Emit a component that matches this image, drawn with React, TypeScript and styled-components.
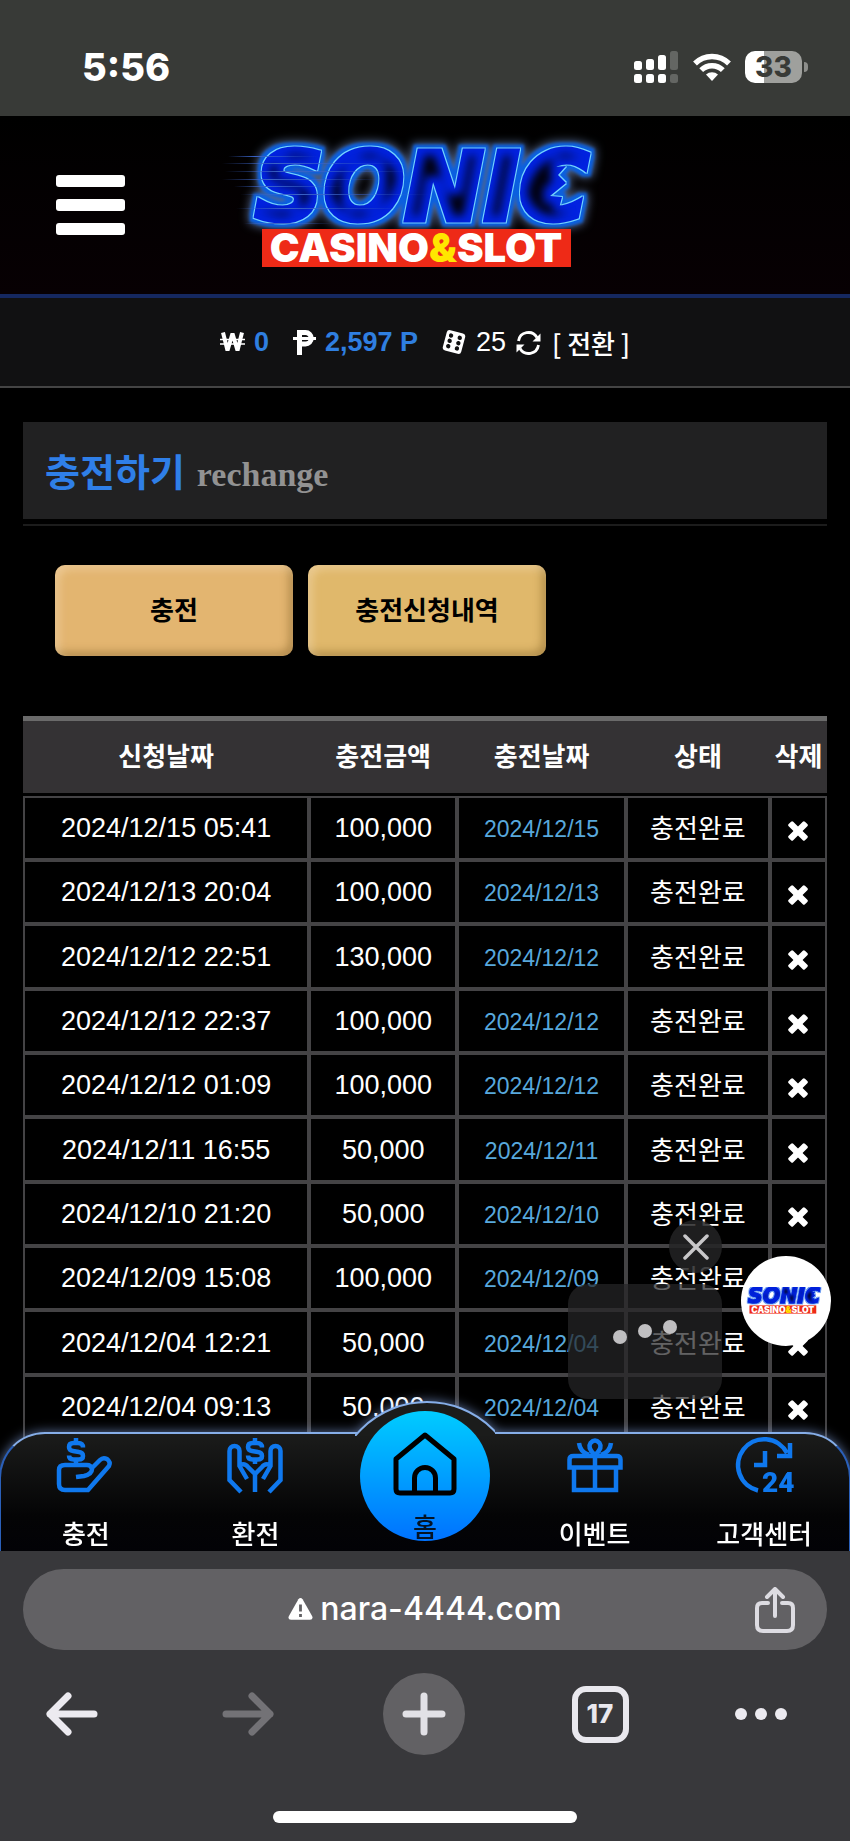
import React from "react";
import styled, { createGlobalStyle } from "styled-components";

const sans = `"Liberation Sans", "Noto Sans CJK KR", sans-serif`;
const korean = `"Noto Sans CJK KR", sans-serif`;
const system = `Inter, "Liberation Sans", sans-serif`;

const GlobalStyle = createGlobalStyle`
  * { box-sizing: border-box; }
  body { margin: 0; background: #000; }
  button { border: 0; padding: 0; background: none; color: inherit; font: inherit; cursor: pointer; }
  a { color: inherit; text-decoration: none; }
  svg { display: block; flex: none; }
`;

const Page = styled.div`
  display: flex;
  flex-direction: column;
  min-height: 100vh;
  background: #000;
  color: #fff;
  font-family: ${sans};
`;

/* ---------- phone status bar ---------- */

const StatusBar = styled.div`
  display: flex;
  align-items: center;
  justify-content: space-between;
  height: 116px;
  padding: 18px 42px 0 82px;
  background: #383a37;
  font-family: ${system};
`;

const Clock = styled.time`
  font-size: 38px;
  line-height: 40px;
  font-weight: 800;
`;

const StatusIcons = styled.div`
  display: flex;
  align-items: center;
  gap: 14px;
`;

const Battery = styled.div`
  display: flex;
  align-items: center;
  gap: 2px;

  &::after {
    content: "";
    width: 4px;
    height: 10px;
    border-radius: 0 4px 4px 0;
    background: #8d8e8b;
  }
`;

const BatteryLevel = styled.span`
  width: 57px;
  border-radius: 10px;
  background: linear-gradient(90deg, #fff 34%, #9fa09d 34%);
  color: #383a37;
  font-size: 28px;
  line-height: 32px;
  font-weight: 800;
  text-align: center;
`;

/* ---------- site ---------- */

const Site = styled.div`
  position: relative;
  flex: 1;
  padding-bottom: 111px;
  overflow: hidden;
`;

const Header = styled.header`
  display: grid;
  grid-template-columns: 1fr auto 1fr;
  align-items: center;
  height: 182px;
  padding: 0 56px;
  border-bottom: 4px solid #152860;
  background: linear-gradient(#000, #070003);
`;

const MenuButton = styled.button`
  display: flex;
  flex-direction: column;
  gap: 12px;
  width: 69px;
`;

const MenuBar = styled.span`
  height: 12px;
  border-radius: 3px;
  background: #fff;
`;

const Balance = styled.div`
  display: flex;
  align-items: center;
  justify-content: center;
  height: 90px;
  border-bottom: 2px solid #444;
  background: #111112;
  font-size: 27px;
  line-height: 32px;
`;

const Amount = styled.b`
  margin: 0 24px 0 9px;
  color: #2f7fe0;
`;

const SpinCount = styled.span`
  margin: 0 10px;
`;

const ConvertButton = styled.button`
  display: flex;
  align-items: center;
  gap: 11px;
  padding-top: 2px;
  font-family: ${korean};
  font-size: 26px;
  line-height: 32px;
  font-weight: 500;
`;

const Content = styled.main`
  padding: 34px 23px 0;
`;

const TitleBox = styled.div`
  display: flex;
  align-items: center;
  height: 97px;
  padding: 2px 22px 0;
  background: #212122;
`;

const Title = styled.h1`
  display: flex;
  align-items: baseline;
  gap: 12px;
  margin: 0;
  color: #2f7fe8;
  font-family: ${korean};
  font-size: 38px;
  line-height: 49px;
  font-weight: 700;
`;

const Subtitle = styled.small`
  color: #929292;
  font-family: "Liberation Serif", serif;
  font-size: 34px;
  font-weight: 700;
`;

const Rule = styled.hr`
  height: 2px;
  margin: 5px 0 39px;
  border: 0;
  background: #1c1c1c;
`;

const TabButtons = styled.div`
  display: flex;
  gap: 15px;
  padding: 0 32px;
`;

const TabButton = styled.button<{ $active?: boolean }>`
  width: 238px;
  height: 91px;
  padding-bottom: 4px;
  border-radius: 10px;
  background: ${(p) => (p.$active ? "#e0b86b" : "#e3b570")};
  box-shadow:
    inset 4px 4px 8px rgba(255, 235, 205, 0.4),
    inset -4px -4px 8px rgba(90, 60, 10, 0.35);
  color: #000;
  font-family: ${korean};
  font-size: 26px;
  font-weight: 700;
`;

const History = styled.table`
  width: 100%;
  margin-top: 60px;
  border-collapse: separate;
  border-spacing: 0;
  table-layout: fixed;
  text-align: center;
  font-size: 27px;
  line-height: 32px;
`;

const HeadCell = styled.th<{ $width: string }>`
  width: ${(p) => p.$width};
  height: 80px;
  padding: 0 0 4px;
  border-top: 5px solid #6a6a6a;
  border-bottom: 3px solid #000;
  background: #343234;
  font-family: ${korean};
  font-size: 26px;
  font-weight: 700;
  white-space: nowrap;
`;

const Row = styled.tr`
  height: 64px;

  &:nth-child(3n) {
    height: 65px;
  }
`;

const Cell = styled.td`
  padding: 0;
  border: 2px solid #444345;
  white-space: nowrap;
`;

const DateCell = styled(Cell)`
  padding-top: 2px;
  color: #58a8dc;
  font-size: 23px;
`;

const StateCell = styled(Cell)`
  padding-bottom: 2px;
  font-family: ${korean};
  font-size: 26px;
`;

const DeleteCell = styled(Cell)`
  padding-top: 6px;
`;

const DeleteButton = styled.button`
  display: block;
  margin: 0 auto;
`;

/* ---------- floating chat ---------- */

const Chat = styled.aside`
  position: absolute;
  right: 19px;
  bottom: 152px;
  display: flex;
  align-items: flex-start;
  gap: 19px;
`;

const ChatPreview = styled.div`
  display: flex;
  flex-direction: column;
  align-items: flex-end;
  gap: 11px;
`;

const ChatClose = styled.button`
  display: grid;
  place-items: center;
  width: 53px;
  height: 53px;
  border-radius: 50%;
  background: rgba(35, 35, 36, 0.85);
`;

const Typing = styled.div`
  display: grid;
  place-items: center;
  width: 154px;
  height: 115px;
  padding-bottom: 20px;
  border-radius: 20px;
  background: rgba(38, 38, 39, 0.72);
`;

const ChatBubble = styled.button`
  display: grid;
  place-items: center;
  width: 90px;
  height: 90px;
  margin-top: 36px;
  border-radius: 50%;
  background: #fff;
`;

/* ---------- bottom navigation ---------- */

const BottomNav = styled.nav`
  position: absolute;
  inset: auto 0 0;
  filter: drop-shadow(0 0 6px rgba(150, 185, 255, 0.6));
`;

const NavList = styled.ul`
  display: grid;
  grid-template-columns: repeat(5, 1fr);
  height: 119px;
  margin: 0 -1px;
  padding: 0;
  border: 2px solid #2a5fb8;
  border-top-color: #86aee8;
  border-bottom: 0;
  border-radius: 46px 46px 0 0;
  background: linear-gradient(#1b1c1b, #040405 70%, #020206);
  list-style: none;
`;

const NavHump = styled.div`
  position: absolute;
  top: -33px;
  left: calc(50% - 70px);
  width: 140px;
  height: 35px;
  overflow: hidden;

  &::before {
    content: "";
    display: block;
    width: 184px;
    height: 184px;
    margin-left: -22px;
    border: 2px solid #86aee8;
    border-radius: 50%;
    background: #1b1c1b;
  }
`;

const NavItem = styled.li`
  position: relative;
  display: flex;
  justify-content: center;
`;

const NavLink = styled.a`
  display: flex;
  flex-direction: column;
  align-items: center;
  gap: 23px;
  padding-top: 4px;
  color: #fff;
  font-family: ${korean};
  font-size: 26px;
  line-height: 32px;
  font-weight: 500;
`;

const HomeLink = styled.a`
  position: absolute;
  top: -23px;
  display: flex;
  flex-direction: column;
  align-items: center;
  gap: 14px;
  width: 130px;
  height: 130px;
  padding-top: 21px;
  border-radius: 50%;
  background: linear-gradient(#00ccff, #0072ff);
  color: #041426;
  font-family: ${korean};
  font-size: 26px;
  line-height: 32px;
  font-weight: 500;
`;

/* ---------- browser chrome ---------- */

const Browser = styled.footer`
  display: flex;
  flex-direction: column;
  height: 290px;
  padding-top: 18px;
  background: #38383b;
  font-family: ${system};
`;

const AddressBar = styled.div`
  display: grid;
  grid-template-columns: 1fr auto 1fr;
  align-items: center;
  height: 81px;
  margin: 0 23px;
  padding: 0 32px;
  border-radius: 41px;
  background: #626164;
`;

const Address = styled.button`
  grid-column: 2;
  display: flex;
  align-items: center;
  gap: 7px;
  padding-bottom: 2px;
  font-size: 32px;
  line-height: 40px;
  font-weight: 500;
`;

const ShareButton = styled.button`
  justify-self: end;
`;

const Toolbar = styled.div`
  display: flex;
  justify-content: space-between;
  margin-top: 23px;
  padding: 0 33px 0 31px;
`;

const ToolButton = styled.button<{ $filled?: boolean; $start?: boolean }>`
  display: flex;
  align-items: center;
  justify-content: ${(p) => (p.$start ? "flex-start" : "center")};
  width: 82px;
  height: 82px;
  border-radius: 50%;
  background: ${(p) => (p.$filled ? "#626164" : "transparent")};
`;

const TabCount = styled.span`
  width: 57px;
  height: 57px;
  border: 6px solid #e9e8ee;
  border-radius: 14px;
  color: #e9e8ee;
  font-size: 26px;
  line-height: 44px;
  font-weight: 800;
  text-align: center;
`;

const HomeIndicator = styled.div`
  width: 304px;
  height: 12px;
  margin: auto auto 18px;
  border-radius: 6px;
  background: #fff;
`;

/* ---------- drawings ---------- */

const speedLines = [
  [8, 26, 90], [2, 33, 180], [5, 41, 190], [2, 49, 160],
  [14, 56, 110], [20, 64, 190], [16, 78, 170], [24, 93, 90],
];

function Logo({ width, light = false }: { width: number; light?: boolean }) {
  const id = light ? "light" : "dark";
  return (
    <svg
      width={width}
      viewBox={light ? "26 14 370 128" : "0 0 410 150"}
      role="img"
      aria-label="SONIC CASINO&SLOT"
    >
      <defs>
        {/* halo, blue rim, bright outline, fill and dark core, built up from one word */}
        <filter id={`${id}-neon`} x="-10%" y="-20%" width="120%" height="140%" colorInterpolationFilters="sRGB">
          <feMorphology in="SourceAlpha" operator="dilate" radius="5" result="wide" />
          <feGaussianBlur in="wide" stdDeviation="5" result="halo" />
          <feFlood floodColor={light ? "#ffffff" : "#54688f"} />
          <feComposite in2="halo" operator="in" result="haloPaint" />
          <feMorphology in="SourceAlpha" operator="dilate" radius="4" result="rim0" />
          <feGaussianBlur in="rim0" stdDeviation="1.5" result="rim" />
          <feFlood floodColor={light ? "#6d9cf0" : "#0a5fe0"} />
          <feComposite in2="rim" operator="in" result="rimPaint" />
          <feMorphology in="SourceAlpha" operator="dilate" radius="1" result="edge" />
          <feFlood floodColor={light ? "#0a3ad0" : "#74d4ff"} />
          <feComposite in2="edge" operator="in" result="edgePaint" />
          <feMorphology in="SourceAlpha" operator="erode" radius="7" result="core0" />
          <feGaussianBlur in="core0" stdDeviation="4" result="core" />
          <feFlood floodColor="#01010f" />
          <feComposite in2="core" operator="in" result="corePaint" />
          <feMerge>
            <feMergeNode in="haloPaint" />
            <feMergeNode in="rimPaint" />
            <feMergeNode in="edgePaint" />
            <feMergeNode in="SourceGraphic" />
            <feMergeNode in="corePaint" />
          </feMerge>
        </filter>
        <linearGradient id={`${id}-line`}>
          <stop offset="0" stopColor="#3a63c8" stopOpacity="0" />
          <stop offset="0.3" stopColor="#3a63c8" />
          <stop offset="1" stopColor="#3a63c8" stopOpacity="0" />
        </linearGradient>
      </defs>
      <g filter={`url(#${id}-neon)`} fill="#0222e0">
        <text
          x="35"
          y="90"
          fontFamily="'DejaVu Sans', sans-serif"
          fontSize="95"
          fontWeight="700"
          fontStyle="italic"
          stroke="#0222e0"
          strokeWidth="5"
        >
          SONIC
        </text>
        {/* quills in the mouth of the last letter */}
        <path d="M322 38L346 36L338 45L346 53L330 66L342 67L338 82L318 76Z" />
      </g>
      {!light &&
        speedLines.map(([x, y, w]) => (
          <rect key={y} x={x} y={y} width={w} height="1" fill={`url(#${id}-line)`} />
        ))}
      <rect x="42" y="99" width="309" height="38" fill="#ee2a17" />
      <text
        x="196"
        y="132"
        textAnchor="middle"
        fontFamily="Inter, sans-serif"
        fontSize="40"
        fontWeight="900"
        fill="#fff"
      >
        CASINO<tspan fill="#ffe600">&amp;</tspan>SLOT
      </text>
    </svg>
  );
}

const SignalIcon = () => (
  <svg width="45" height="32" viewBox="0 0 45 32" fill="#fff" aria-hidden="true">
    <rect x="0" y="10" width="8" height="9" rx="2.5" />
    <rect x="12" y="8" width="8" height="11" rx="2.5" />
    <rect x="24" y="4" width="8" height="15" rx="2.5" />
    <rect x="36" y="0" width="8" height="19" rx="2.5" fill="#646663" />
    <rect x="0" y="23" width="8" height="9" rx="2.5" />
    <rect x="12" y="23" width="8" height="9" rx="2.5" />
    <rect x="24" y="23" width="8" height="9" rx="2.5" />
    <rect x="36" y="23" width="8" height="9" rx="2.5" fill="#646663" />
  </svg>
);

const WifiIcon = () => (
  <svg width="38" height="28" viewBox="0 0 38 28" aria-hidden="true">
    <g fill="none" stroke="#fff" strokeWidth="5.4">
      <path d="M2 10.5a24 24 0 0 1 34 0" />
      <path d="M8.2 17.2a15.3 15.3 0 0 1 21.6 0" />
    </g>
    <path d="M19 28l-6-6.4a8.6 8.6 0 0 1 12 0z" fill="#fff" />
  </svg>
);

const WonIcon = () => (
  <svg width="25" height="20" viewBox="0 0 25 20" fill="none" stroke="#fff" aria-hidden="true">
    <path d="M3 0.5l4.5 18 5-17 5 17 4.5-18" strokeWidth="4" strokeLinejoin="bevel" />
    <path d="M0 7.5h25M0 12h25" strokeWidth="1.6" />
  </svg>
);

const PointIcon = () => (
  <svg width="23" height="25" viewBox="0 0 23 25" fill="none" stroke="#fff" aria-hidden="true">
    <path d="M6.5 25V2.5h6a5.5 5.5 0 0 1 0 11.5h-6" strokeWidth="5" />
    <path d="M0 8.5h23" strokeWidth="3" />
  </svg>
);

const DiceIcon = () => (
  <svg width="24" height="24" viewBox="0 0 24 24" aria-hidden="true">
    <g transform="rotate(15 12 12)">
      <rect x="2.5" y="1.5" width="19" height="21" rx="3" fill="#fff" />
      {[6.5, 12, 17.5].map((y) => (
        <g key={y} fill="#111112">
          <circle cx="7.5" cy={y} r="2.2" />
          <circle cx="16.5" cy={y} r="2.2" />
        </g>
      ))}
    </g>
  </svg>
);

const SyncIcon = () => (
  <svg width="25" height="24" viewBox="0 0 25 24" fill="none" stroke="#fff" strokeWidth="2.8" aria-hidden="true">
    <path d="M2.5 10a10 10 0 0 1 18.5-3.5M22.5 14a10 10 0 0 1-18.5 3.5" />
    <path d="M24.5 2.5v8h-8z M.5 21.5v-8h8z" fill="#fff" stroke="none" />
  </svg>
);

const CrossIcon = () => (
  <svg width="20" height="20" viewBox="0 0 20 20" fill="#fff" aria-hidden="true">
    <rect x="-1.5" y="6.8" width="23" height="6.4" rx="1.5" transform="rotate(45 10 10)" />
    <rect x="-1.5" y="6.8" width="23" height="6.4" rx="1.5" transform="rotate(-45 10 10)" />
  </svg>
);

const navStroke = {
  width: 56,
  height: 56,
  viewBox: "0 0 56 56",
  fill: "none",
  stroke: "#0f78ee",
  strokeWidth: 4.5,
  "aria-hidden": true,
} as const;

const dollar =
  "M26 9.5Q26 5 21 5H16.5Q12 5 12 9Q12 12.5 16 13L22 14Q26 14.5 26 18Q26 21.5 21.5 21.5H16.5Q12 21.5 12 17.5M19 0V5M19 21.5V26";

const DepositIcon = () => (
  <svg {...navStroke} viewBox="1 0 56 56" overflow="visible">
    <path d={dollar} />
    <path d="M19 39L27 38Q35 36 35 31Q34 27 30 27H8Q2 27 2 32V46Q2 52 8 52H31L52 28Q54 24 50 21Q46 19 43 22L34 31" />
  </svg>
);

const WithdrawIcon = () => (
  <svg {...navStroke}>
    <path d={dollar} transform="translate(9 0)" />
    <path d="M14 54L2.5 42V13a5 5 0 0 1 10 0V28L20 41M13 27Q18 25 21 29L28 36V54" />
    <path d="M42 54L53.5 42V13a5 5 0 0 0 -10 0V28L36 41M43 27Q38 25 35 29L28 36" />
  </svg>
);

const GiftIcon = () => (
  <svg {...navStroke}>
    <path d="M2.5 29.5V21.5Q2.5 18 6.5 18H49.5Q53.5 18 53.5 21.5V29.5ZM7 30V52H49V30M28 18V52" />
    <path d="M28 17Q20 10 23.5 5Q28 0 32.5 5Q36 10 28 17M12 5Q13 14 22 17M44 5Q43 14 34 17" />
  </svg>
);

const SupportIcon = () => (
  <svg {...navStroke} viewBox="-1 0 56 56" overflow="visible">
    <path d="M21 52.5A26 26 0 1 1 50 15M53 5V18H40M28 13V27H17" />
    <text x="25" y="54" fontFamily="Roboto, sans-serif" fontSize="28" fontWeight="900" fill="#0f78ee" stroke="none">
      24
    </text>
  </svg>
);

const HomeIcon = () => (
  <svg width="64" height="64" viewBox="0 0 64 64" fill="none" stroke="#000" strokeWidth="5" strokeLinejoin="round" aria-hidden="true">
    <path d="M32 3L61 27V57Q61 61 57 61H7Q3 61 3 57V27Z" />
    <path d="M21.5 61V46a10.5 10.5 0 0 1 21 0V61" />
  </svg>
);

const WarningIcon = () => (
  <svg width="25" height="22" viewBox="0 0 25 22" aria-hidden="true">
    <path d="M10.4 1.2q2.1-2.3 4.2 0l9.6 17q1.2 3.2-2.2 3.6H3q-3.4-.4-2.2-3.6z" fill="#fff" />
    <path d="M12.5 6.5v7M12.5 16v3" stroke="#626164" strokeWidth="2.8" />
  </svg>
);

const ShareIcon = () => (
  <svg width="40" height="46" viewBox="0 0 40 46" fill="none" stroke="#dddce2" strokeWidth="4" strokeLinecap="round" strokeLinejoin="round" aria-hidden="true">
    <path d="M13 16H7q-5 0-5 5v17q0 6 6 6h24q6 0 6-6V21q0-5-5-5h-6" />
    <path d="M20 29V3M12 10l8-8 8 8" />
  </svg>
);

const ArrowIcon = ({ forward = false }: { forward?: boolean }) => (
  <svg
    width="52"
    height="44"
    viewBox="0 0 52 44"
    fill="none"
    stroke={forward ? "#737276" : "#eceaf0"}
    strokeWidth="7"
    strokeLinecap="round"
    strokeLinejoin="round"
    aria-hidden="true"
  >
    <path d={forward ? "M4 22H48M30 4l18 18-18 18" : "M48 22H4M22 4L4 22l18 18"} />
  </svg>
);

/* ---------- data ---------- */

const columns = [
  ["신청날짜", "35.6%"],
  ["충전금액", "18.4%"],
  ["충전날짜", "21%"],
  ["상태", "17.9%"],
  ["삭제", "7.1%"],
];

const deposits = [
  ["2024/12/15 05:41", "100,000"],
  ["2024/12/13 20:04", "100,000"],
  ["2024/12/12 22:51", "130,000"],
  ["2024/12/12 22:37", "100,000"],
  ["2024/12/12 01:09", "100,000"],
  ["2024/12/11 16:55", "50,000"],
  ["2024/12/10 21:20", "50,000"],
  ["2024/12/09 15:08", "100,000"],
  ["2024/12/04 12:21", "50,000"],
  ["2024/12/04 09:13", "50,000"],
];

export default function App() {
  return (
    <Page>
      <GlobalStyle />
      <StatusBar>
        <Clock>5:56</Clock>
        <StatusIcons>
          <SignalIcon />
          <WifiIcon />
          <Battery>
            <BatteryLevel>33</BatteryLevel>
          </Battery>
        </StatusIcons>
      </StatusBar>

      <Site>
        <Header>
          <MenuButton aria-label="메뉴">
            <MenuBar />
            <MenuBar />
            <MenuBar />
          </MenuButton>
          <a href="#home">
            <Logo width={410} />
          </a>
        </Header>

        <Balance>
          <WonIcon />
          <Amount>0</Amount>
          <PointIcon />
          <Amount>2,597 P</Amount>
          <DiceIcon />
          <SpinCount>25</SpinCount>
          <ConvertButton>
            <SyncIcon />[ 전환 ]
          </ConvertButton>
        </Balance>

        <Content>
          <TitleBox>
            <Title>
              충전하기 <Subtitle>rechange</Subtitle>
            </Title>
          </TitleBox>
          <Rule />
          <TabButtons>
            <TabButton>충전</TabButton>
            <TabButton $active>충전신청내역</TabButton>
          </TabButtons>

          <History>
            <thead>
              <tr>
                {columns.map(([label, width]) => (
                  <HeadCell key={label} $width={width} scope="col">
                    {label}
                  </HeadCell>
                ))}
              </tr>
            </thead>
            <tbody>
              {deposits.map(([requested, amount]) => (
                <Row key={requested}>
                  <Cell>{requested}</Cell>
                  <Cell>{amount}</Cell>
                  <DateCell>{requested.slice(0, 10)}</DateCell>
                  <StateCell>충전완료</StateCell>
                  <DeleteCell>
                    <DeleteButton aria-label="삭제">
                      <CrossIcon />
                    </DeleteButton>
                  </DeleteCell>
                </Row>
              ))}
            </tbody>
          </History>
        </Content>

        <Chat>
          <ChatPreview>
            <ChatClose aria-label="닫기">
              <svg width="26" height="26" viewBox="0 0 26 26" stroke="#c8c7c9" strokeWidth="3.5" strokeLinecap="round">
                <path d="M2 2l22 22M24 2L2 24" />
              </svg>
            </ChatClose>
            <Typing>
              <svg width="64" height="26" viewBox="0 0 64 26" fill="#c0bfc1" aria-hidden="true">
                <circle cx="7" cy="18" r="7" />
                <circle cx="32" cy="12" r="7" />
                <circle cx="57" cy="8" r="7" />
              </svg>
            </Typing>
          </ChatPreview>
          <ChatBubble aria-label="상담">
            <Logo width={80} light />
          </ChatBubble>
        </Chat>

        <BottomNav>
          <NavList>
            <NavItem>
              <NavLink href="#deposit">
                <DepositIcon />
                충전
              </NavLink>
            </NavItem>
            <NavItem>
              <NavLink href="#withdraw">
                <WithdrawIcon />
                환전
              </NavLink>
            </NavItem>
            <NavItem>
              <NavHump />
              <HomeLink href="#home">
                <HomeIcon />홈
              </HomeLink>
            </NavItem>
            <NavItem>
              <NavLink href="#event">
                <GiftIcon />
                이벤트
              </NavLink>
            </NavItem>
            <NavItem>
              <NavLink href="#support">
                <SupportIcon />
                고객센터
              </NavLink>
            </NavItem>
          </NavList>
        </BottomNav>
      </Site>

      <Browser>
        <AddressBar>
          <Address>
            <WarningIcon />
            nara-4444.com
          </Address>
          <ShareButton aria-label="공유">
            <ShareIcon />
          </ShareButton>
        </AddressBar>
        <Toolbar>
          <ToolButton aria-label="뒤로">
            <ArrowIcon />
          </ToolButton>
          <ToolButton aria-label="앞으로" disabled>
            <ArrowIcon forward />
          </ToolButton>
          <ToolButton $filled aria-label="새 탭">
            <svg width="44" height="44" viewBox="0 0 44 44" stroke="#e2e1e6" strokeWidth="7" strokeLinecap="round">
              <path d="M22 4V40M4 22H40" />
            </svg>
          </ToolButton>
          <ToolButton>
            <TabCount>17</TabCount>
          </ToolButton>
          <ToolButton $start aria-label="더보기">
            <svg width="52" height="14" viewBox="0 0 52 14" fill="#eceaf0">
              <circle cx="6" cy="7" r="6" />
              <circle cx="26" cy="7" r="6" />
              <circle cx="46" cy="7" r="6" />
            </svg>
          </ToolButton>
        </Toolbar>
        <HomeIndicator />
      </Browser>
    </Page>
  );
}
